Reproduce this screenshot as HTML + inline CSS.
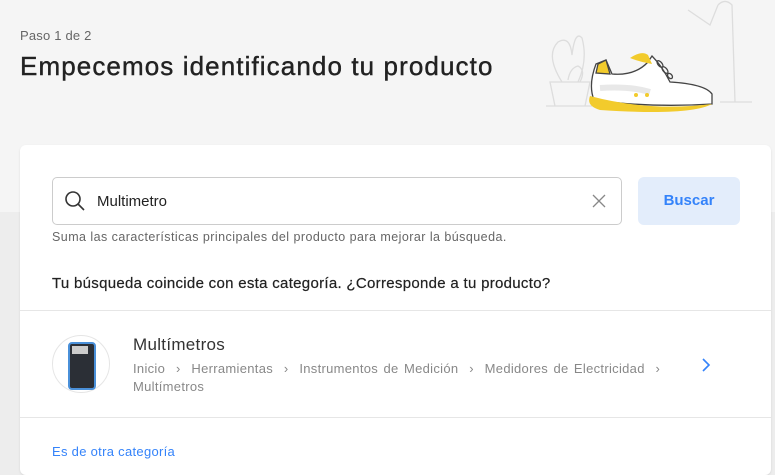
<!DOCTYPE html>
<html><head><meta charset="utf-8"><style>
body{margin:0;width:775px;height:458px;overflow:hidden;background:#ededed;font-family:"Liberation Sans",sans-serif;position:relative}
.top{position:absolute;left:0;top:0;width:775px;height:212px;background:#f5f5f5}
.card{position:absolute;left:20px;top:145px;width:751px;height:330px;background:#fff;border-radius:6px;box-shadow:0 1px 2px rgba(0,0,0,.1)}
.t{position:absolute;white-space:nowrap}
</style></head><body>
<div class="top"></div>
<div class="t" style="left:20px;top:28px;font-size:13px;color:#666;letter-spacing:.2px">Paso 1 de 2</div>
<div class="t" style="left:20px;top:51px;font-size:26px;color:#222;letter-spacing:1.1px;-webkit-text-stroke:.4px #222">Empecemos identificando tu producto</div>
<svg style="position:absolute;left:530px;top:0" width="245" height="120" viewBox="0 0 245 120" fill="none" stroke="#ddd" stroke-width="1.3">
<path d="M158 10 L180 25 L188 5 M188 5 Q195 -2 202 5 L205 102 M190 102 H222 M16 106 H62 M20 82 H60 L55 106 H25 Z M32 82 Q15 55 28 42 Q40 35 42 55 Q45 30 52 38 Q58 60 48 82 M38 80 Q40 68 48 66 Q56 70 50 82"/>
<path d="M66 64 L76 60 L82 74 Q105 76 118 62 L122 56 Q132 66 140 82 Q175 84 182 94 L182 104 Q120 108 64 100 Q58 85 66 64Z" fill="#fff" stroke="#444" stroke-width="1.3"/>
<path d="M68 64 L76 60 L80 74 L66 73Z" fill="#f2cb2c" stroke="#444"/>
<path d="M100 58 Q112 50 118 55 L122 64 Q110 62 100 58Z" fill="#f2cb2c" stroke="none"/>
<path d="M60 96 Q120 112 182 104 Q160 116 70 110 Q56 106 60 96Z" fill="#f2cb2c" stroke="none"/>
<path d="M70 88 Q100 86 120 92" stroke="#e8e8e8" stroke-width="6"/>
<circle cx="106" cy="95" r="2" fill="#f2cb2c" stroke="none"/><circle cx="117" cy="95" r="2" fill="#f2cb2c" stroke="none"/>
<ellipse cx="130" cy="64" rx="2" ry="4" stroke="#444" transform="rotate(-40 130 64)"/>
<ellipse cx="135" cy="70" rx="2" ry="4" stroke="#444" transform="rotate(-40 135 70)"/>
<ellipse cx="140" cy="76" rx="2" ry="3" stroke="#444" transform="rotate(-40 140 76)"/>
</svg>
<div class="card"></div>
<div style="position:absolute;left:52px;top:177px;width:568px;height:46px;border:1px solid #ccc;border-radius:5px;background:#fff"></div>
<svg style="position:absolute;left:64px;top:190px" width="22" height="22" viewBox="0 0 22 22" fill="none" stroke="#333" stroke-width="1.6"><circle cx="9" cy="9" r="7"/><path d="M14 14 L20 20"/></svg>
<div class="t" style="left:97px;top:193px;font-size:15px;color:#222">Multimetro</div>
<svg style="position:absolute;left:592px;top:194px" width="14" height="14" viewBox="0 0 14 14" stroke="#888" stroke-width="1.3"><path d="M1 1 L13 13 M13 1 L1 13"/></svg>
<div style="position:absolute;left:638px;top:177px;width:102px;height:48px;background:#e3edfb;border-radius:6px;color:#3483fa;font-size:15px;font-weight:bold;text-align:center;line-height:48px">Buscar</div>
<div class="t" style="left:52px;top:230px;font-size:12.5px;color:#666;letter-spacing:.45px">Suma las características principales del producto para mejorar la búsqueda.</div>
<div class="t" style="left:52px;top:275px;font-size:15px;color:#222;letter-spacing:.3px;-webkit-text-stroke:.2px #222">Tu búsqueda coincide con esta categoría. ¿Corresponde a tu producto?</div>
<div style="position:absolute;left:20px;top:310px;width:751px;height:1px;background:#e6e6e6"></div>
<div style="position:absolute;left:52px;top:335px;width:56px;height:56px;border:1px solid #e5e5e5;border-radius:50%;background:#fff"></div>
<div style="position:absolute;left:68px;top:342px;width:24px;height:44px;background:#2b2f36;border:2px solid #4a90d9;border-radius:4px"></div>
<div style="position:absolute;left:72px;top:346px;width:16px;height:8px;background:#ccc"></div>
<div class="t" style="left:133px;top:335px;font-size:17px;color:#333;letter-spacing:.3px">Multímetros</div>
<div class="t" style="left:133px;top:361px;font-size:13px;color:#888;letter-spacing:.3px;word-spacing:1.5px">Inicio &nbsp;›&nbsp; Herramientas &nbsp;›&nbsp; Instrumentos de Medición &nbsp;›&nbsp; Medidores de Electricidad &nbsp;›</div>
<div class="t" style="left:133px;top:379px;font-size:13px;color:#888;letter-spacing:.3px">Multímetros</div>
<svg style="position:absolute;left:700px;top:357px" width="12" height="16" viewBox="0 0 12 16" fill="none" stroke="#3483fa" stroke-width="1.6"><path d="M3 2 L9 8 L3 14"/></svg>
<div style="position:absolute;left:20px;top:417px;width:751px;height:1px;background:#e6e6e6"></div>
<div class="t" style="left:52px;top:444px;font-size:13px;color:#3483fa;letter-spacing:.3px">Es de otra categoría</div>
</body></html>
